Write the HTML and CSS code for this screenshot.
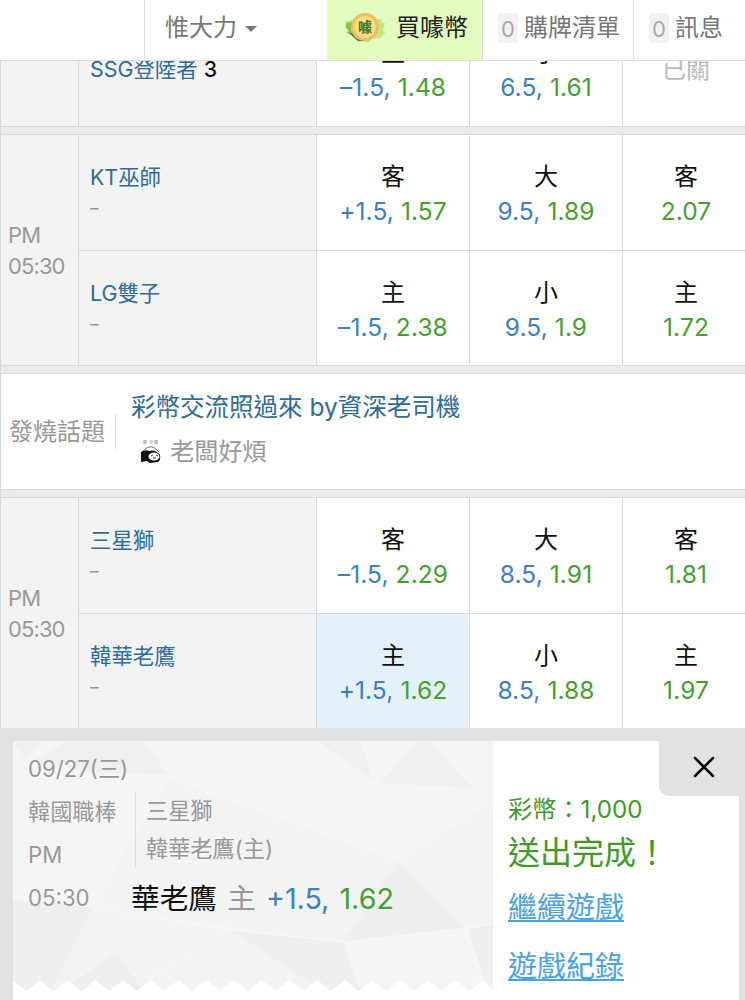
FILE: index.html
```html
<!DOCTYPE html>
<html lang="zh-Hant">
<head>
    <meta charset="UTF-8">
    <meta name="viewport" content="width=device-width, initial-scale=1.0">
    <title>韓國職棒</title>
    <link rel="stylesheet" href="styles.css">
</head>
<body>
    <header class="topbar">
        <div class="logo"></div>
        <div class="user">惟大力 <span class="caret"></span></div>
        <div class="buy">
            <svg class="coin" width="42" height="34" viewBox="0 0 42 34">
                <path d="M1 10l10-1 10-2 16 1 1 4 3 0-2 7 2 3-5 5-9 1-2 3-12-1-5-6-6-2 2-3-3-3 3-2z" fill="#c3e582"/>
                <path d="M2 12l8-2-1 15-6-3 2-2-3-3z" fill="#8cc04c"/>
                <path d="M5 22l8 1 9 7-8 0z" fill="#5e7a30"/>
                <circle cx="21" cy="16" r="14" fill="#efbd62"/>
                <circle cx="21" cy="16" r="11" fill="#f9dc84"/>
                <text x="21" y="21" class="coin-text">噱</text>
            </svg>
            <span>買噱幣</span>
        </div>
        <div class="cart"><b class="count">0</b>購牌清單</div>
        <div class="news"><b class="count">0</b>訊息</div>
    </header>

    <main class="board">
        <section class="game clipped">
            <div class="time"></div>
            <div class="rows">
                <div class="row">
                    <div class="team"><a>SSG登陸者</a> <strong>3</strong></div>
                    <div class="odds">主<p><i>–1.5,</i> <em>1.48</em></p></div>
                    <div class="odds">小<p><i>6.5,</i> <em>1.61</em></p></div>
                    <div class="odds last closed">已關</div>
                </div>
            </div>
        </section>

        <section class="game">
            <div class="time">PM<br>05:30</div>
            <div class="rows">
                <div class="row">
                    <div class="team"><a>KT巫師</a><small>–</small></div>
                    <div class="odds">客<p><i>+1.5,</i> <em>1.57</em></p></div>
                    <div class="odds">大<p><i>9.5,</i> <em>1.89</em></p></div>
                    <div class="odds last">客<p><em>2.07</em></p></div>
                </div>
                <div class="row">
                    <div class="team"><a>LG雙子</a><small>–</small></div>
                    <div class="odds">主<p><i>–1.5,</i> <em>2.38</em></p></div>
                    <div class="odds">小<p><i>9.5,</i> <em>1.9</em></p></div>
                    <div class="odds last">主<p><em>1.72</em></p></div>
                </div>
            </div>
        </section>

        <section class="topic">
            <div class="topic-label">發燒話題</div>
            <div class="topic-body">
                <a>彩幣交流照過來 by資深老司機</a>
                <div class="author">
                    <svg width="22" height="26" viewBox="0 0 22 26">
                        <path d="M3 2h4M3 4h4M5 1v4M10 2h3M10 4h3M14 2h4M14 4h4M16 1v4" stroke="#888" stroke-width=".7"/>
                        <path d="M3 12Q11 3 19 13" stroke="#555" stroke-width=".8" fill="none"/>
                        <path d="M1 23V13q4-3 8-1 7-2 11 4 1 5-2 7l-8 1-3-2z" fill="#111"/>
                        <ellipse cx="14" cy="17.500" rx="5.500" ry="4" fill="#fff"/>
                        <path d="M11 17l2-1M16 16l2 1M13 19h3" stroke="#444" fill="none"/>
                    </svg>
                    老闆好煩
                </div>
            </div>
        </section>

        <section class="game">
            <div class="time">PM<br>05:30</div>
            <div class="rows">
                <div class="row">
                    <div class="team"><a>三星獅</a><small>–</small></div>
                    <div class="odds">客<p><i>–1.5,</i> <em>2.29</em></p></div>
                    <div class="odds">大<p><i>8.5,</i> <em>1.91</em></p></div>
                    <div class="odds last">客<p><em>1.81</em></p></div>
                </div>
                <div class="row">
                    <div class="team"><a>韓華老鷹</a><small>–</small></div>
                    <div class="odds selected">主<p><i>+1.5,</i> <em>1.62</em></p></div>
                    <div class="odds">小<p><i>8.5,</i> <em>1.88</em></p></div>
                    <div class="odds last">主<p><em>1.97</em></p></div>
                </div>
            </div>
        </section>
    </main>

    <div class="slip">
        <div class="ticket">
            <svg class="ticket-bg" width="480" height="251" viewBox="0 0 480 251">
                <rect width="480" height="251" fill="#f5f5f5"/>
                <path d="M157 39L270 79 385 121 330 201 80 167 110 112z" fill="#f3f3f3"/>
                <path d="M80 167L217 189 127 242 104 211 55 242H37zM385 121L467 69 480 62V182L452 187zM217 189L303 245H127z" fill="#f3f3f3"/>
                <path d="M0 0h30L12 17zM54 0h78l22 33-66-1-68-12zM304 0h43l13 39zM404 0h13l42 47-92-5z" fill="#f0f0f0"/>
                <path d="M0 159l80 8-43 84H0zM104 211l27 40H45zM217 189l113 12 18 50H312zM385 121l67 66-122 14zM455 189l25-6v68h-5z" fill="#efefef"/>
                <path d="M80 167l137 22 113 12 122-14 28-5M452 187l23 64" fill="none" stroke="#f8f8f8"/>
                <path fill="#fff" d="M0 251V240l13.800 10 12.700-11 14.300 11 14-11 13.700 11 14-11 13.700 11 14-11 13.700 11 14-11 13.700 11 14-11 13.700 11 14-11 13.700 11 14-11 13.700 11 14-11 13.700 11 14-11 13.700 11 14-11 13.700 11 14-11 13.700 11 14-11 13.700 11 14-11 13.700 11 14-11 13.700 11 14-11 13.700 11 14-11 11 11 5-4v5z"/>
            </svg>
            <div class="ticket-info">
                <div class="when">09/27(三)<br>韓國職棒<br>PM<br>05:30</div>
                <div class="match">
                    <div class="versus">三星獅<br>韓華老鷹(主)</div>
                    <div class="pick">華老鷹 <span>主</span> <i>+1.5,</i> <em>1.62</em></div>
                </div>
            </div>
        </div>
        <div class="result">
            <div class="amount">彩幣：1,000</div>
            <div class="done">送出完成！</div>
            <a>繼續遊戲</a>
            <a>遊戲紀錄</a>
        </div>
        <div class="close">
            <svg width="22" height="22" viewBox="0 0 22 22">
                <path d="M2 2l18 18M20 2L2 20" stroke="#000" stroke-width="2.500" stroke-linecap="round"/>
            </svg>
        </div>
    </div>
</body>
</html>
```
FILE: styles.css
```css
* {
    box-sizing: border-box;
}

body {
    margin: 0;
    height: 1000px;
    overflow: hidden;
    font-family: Inter, "Noto Sans CJK TC", sans-serif;
    font-weight: 370;
    font-size: 24px;
    color: #111;
    background: #ebebeb;
}

p {
    margin: 0;
}

i, em {
    font-style: normal;
}

i {
    color: #3c80c4;
}

em {
    color: #45a02e;
}

/* top bar */
.topbar {
    display: flex;
    height: 61px;
    background: #fff;
    border-bottom: 1px solid #ddd;
    color: #777;
    line-height: 56px;
    white-space: nowrap;
}

.topbar > div {
    display: flex;
    align-items: flex-start;
}

.logo {
    width: 144px;
}

.user {
    width: 183px;
    padding-left: 20px;
    border-left: 1px solid #ddd;
}

.caret {
    margin: 26px 0 0 8px;
    border: 6px solid transparent;
    border-top-color: #777;
    border-bottom: 0;
}

.buy {
    width: 156px;
    padding-left: 17px;
    background: #e3fcc0;
    border-right: 1px solid #ddd;
    color: #222;
}

.buy span {
    margin-left: 10px;
}

.coin {
    margin-top: 11px;
}

.coin-text {
    font-size: 14px;
    font-weight: bold;
    text-anchor: middle;
    fill: #44701f;
}

.cart {
    width: 151px;
    padding-left: 15px;
    border-right: 1px solid #ddd;
}

.news {
    padding-left: 15px;
}

.count {
    width: 20px;
    height: 30px;
    margin: 13px 6px 0 0;
    border-radius: 3px;
    background: #f2f2f2;
    color: #aaa;
    font-weight: 370;
    font-size: 22px;
    line-height: 32px;
    text-align: center;
}

/* odds board */
.board {
    width: 749px;
    height: 667px;
    border-left: 1px solid #d3dce3;
}

.game {
    display: flex;
    height: 232px;
    margin-bottom: 7px;
    border: solid #d3dce3;
    border-width: 1px 0;
}

.clipped {
    height: 66px;
    border-top: 0;
    overflow: hidden;
}

.clipped .row {
    height: 65px;
    align-items: flex-end;
}

.clipped .row > div {
    height: 115px;
}

.time {
    display: flex;
    align-items: center;
    width: 77px;
    padding: 1px 0 0 7px;
    background: #f3f3f3;
    color: #999;
    font-size: 22px;
    line-height: 31px;
    letter-spacing: -0.9px;
}

.rows {
    flex: 1;
}

.row {
    display: flex;
    height: 115px;
}

.row + .row {
    border-top: 1px solid #d3dce3;
}

.team {
    width: 238px;
    padding: 27px 0 0 11px;
    background: #f3f3f3;
    border-left: 1px solid #d3dce3;
    font-size: 21.4px;
    line-height: 31px;
}

.clipped .team {
    padding-top: 43px;
}

.team a, .topic a {
    color: #2e6c99;
}

.team strong {
    font-weight: 500;
}

.team small {
    display: block;
    color: #999;
    font-size: 17px;
}

.odds {
    width: 153px;
    padding-top: 25px;
    background: #fff;
    border-left: 1px solid #d3dce3;
    line-height: 34px;
    text-align: center;
    white-space: nowrap;
}

.odds p {
    font-size: 24.5px;
    letter-spacing: 0.1px;
}

.last {
    width: 127px;
}

.selected {
    background: #e4f1fb;
}

.clipped .closed {
    padding-top: 42px;
    color: #bbb;
}

/* hot topic */
.topic {
    display: flex;
    align-items: center;
    height: 117px;
    margin-bottom: 7px;
    padding-left: 8px;
    background: #fff;
    border: solid #d3dce3;
    border-width: 1px 0;
}

.topic-label {
    width: 107px;
    height: 35px;
    border-right: 1px solid #ddd;
    color: #999;
    line-height: 35px;
}

.topic-body {
    padding: 0 0 4px 15px;
    line-height: 44px;
}

.topic a {
    font-size: 24.5px;
}

.author {
    display: flex;
    align-items: center;
    color: #999;
    font-size: 24.2px;
}

.author svg {
    margin: 0 8px 0 9px;
}

/* bet slip */
.slip {
    position: relative;
    display: flex;
    height: 272px;
    border: solid #e2e2e2;
    border-width: 13px 6px 0 13px;
    background: #fff;
}

.ticket {
    position: relative;
    width: 480px;
    height: 251px;
}

.ticket-bg {
    position: absolute;
    top: 0;
    left: 0;
}

.ticket-info {
    position: relative;
    display: flex;
    padding-left: 15px;
    color: #999;
    font-size: 22.2px;
}

.when {
    width: 103px;
    padding-top: 6px;
    line-height: 43px;
    white-space: nowrap;
}

.versus {
    height: 76px;
    margin: 51px 0 0 4px;
    padding-left: 10px;
    border-left: 1px solid #ddd;
    line-height: 38px;
}

.pick {
    margin-top: 9px;
    color: #111;
    font-size: 28.7px;
    line-height: 44px;
    white-space: nowrap;
    word-spacing: 2px;
}

.pick span {
    color: #999;
}

.result {
    padding: 51px 0 0 15px;
    color: #3f9a26;
    white-space: nowrap;
}

.amount {
    font-size: 24.2px;
    line-height: 36px;
}

.done {
    font-size: 32px;
    line-height: 50px;
}

.result a {
    display: block;
    color: #4aa3e6;
    font-size: 29px;
    line-height: 59px;
    text-decoration: underline;
}

.close {
    position: absolute;
    top: 0;
    right: -6px;
    display: flex;
    width: 86px;
    height: 55px;
    padding: 15px 0 0 34px;
    border-bottom-left-radius: 10px;
    background: #e2e2e2;
}
```
